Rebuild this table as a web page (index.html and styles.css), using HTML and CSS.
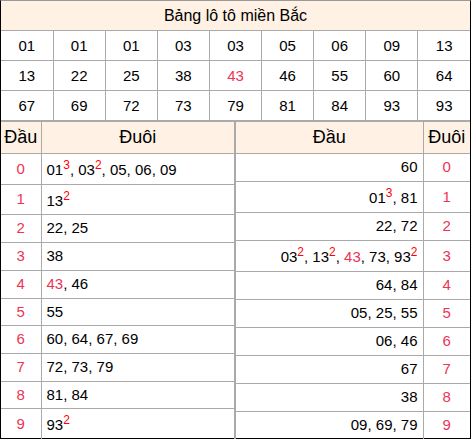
FILE: index.html
```html
<!DOCTYPE html>
<html lang="vi">
<head>
<meta charset="utf-8">
<title>Bảng lô tô miền Bắc</title>
<link rel="stylesheet" href="styles.css">
</head>
<body>
<div class="board">
  <table class="grid">
    <tr><th colspan="9" class="title">Bảng lô tô miền Bắc</th></tr>
    <tr><td>01</td><td>01</td><td>01</td><td>03</td><td>03</td><td>05</td><td>06</td><td>09</td><td>13</td></tr>
    <tr><td>13</td><td>22</td><td>25</td><td>38</td><td class="hl">43</td><td>46</td><td>55</td><td>60</td><td>64</td></tr>
    <tr><td>67</td><td>69</td><td>72</td><td>73</td><td>79</td><td>81</td><td>84</td><td>93</td><td>93</td></tr>
  </table>
  <div class="split">
    <table class="loto loto-left">
      <tr><th class="key">Đầu</th><th>Đuôi</th></tr>
      <tr><td class="key">0</td><td>01<sup>3</sup>, 03<sup>2</sup>, 05, 06, 09</td></tr>
      <tr><td class="key">1</td><td>13<sup>2</sup></td></tr>
      <tr><td class="key">2</td><td>22, 25</td></tr>
      <tr><td class="key">3</td><td>38</td></tr>
      <tr><td class="key">4</td><td><span class="hl">43</span>, 46</td></tr>
      <tr><td class="key">5</td><td>55</td></tr>
      <tr><td class="key">6</td><td>60, 64, 67, 69</td></tr>
      <tr><td class="key">7</td><td>72, 73, 79</td></tr>
      <tr><td class="key">8</td><td>81, 84</td></tr>
      <tr><td class="key">9</td><td>93<sup>2</sup></td></tr>
    </table>
    <table class="loto loto-right">
      <tr><th>Đầu</th><th class="key">Đuôi</th></tr>
      <tr><td class="vals">60</td><td class="key">0</td></tr>
      <tr><td class="vals">01<sup>3</sup>, 81</td><td class="key">1</td></tr>
      <tr><td class="vals">22, 72</td><td class="key">2</td></tr>
      <tr><td class="vals">03<sup>2</sup>, 13<sup>2</sup>, <span class="hl">43</span>, 73, 93<sup>2</sup></td><td class="key">3</td></tr>
      <tr><td class="vals">64, 84</td><td class="key">4</td></tr>
      <tr><td class="vals">05, 25, 55</td><td class="key">5</td></tr>
      <tr><td class="vals">06, 46</td><td class="key">6</td></tr>
      <tr><td class="vals">67</td><td class="key">7</td></tr>
      <tr><td class="vals">38</td><td class="key">8</td></tr>
      <tr><td class="vals">09, 69, 79</td><td class="key">9</td></tr>
    </table>
  </div>
</div>
</body>
</html>
```
FILE: styles.css
```css
* { box-sizing: border-box; }
html, body { margin: 0; padding: 0; background: #fff; }
body {
  font-family: "Liberation Sans", Arial, sans-serif;
  font-size: 15px;
  color: #000;
}
.board {
  width: 471px;
  height: 439px;
  border: 1px solid #000;
  border-top-color: #999;
  display: flex;
  flex-direction: column;
}
table {
  border-collapse: collapse;
  border-spacing: 0;
}
.grid {
  width: 100%;
  table-layout: fixed;
  border-top: hidden;
  border-left: hidden;
  border-right: hidden;
}
.grid td, .grid th {
  border: 1px solid #aaa;
  text-align: center;
  font-weight: normal;
}
.grid .title {
  background: #fff1e4;
  font-size: 16px;
  line-height: 19px;
  padding: 5px 0;
}
.grid td {
  line-height: 17px;
  padding: 6px 0;
}
.split {
  flex: 1;
  display: flex;
  align-items: stretch;
}
.loto {
  height: 100%;
  border-top: 1px solid #aaa;
  border-bottom: hidden;
}
.loto-left { width: 234px; border-left: hidden; }
.loto-right { flex: 1; border-right: hidden; }
.loto th, .loto td {
  border: 1px solid #aaa;
  padding: 5px 5px;
  line-height: 16.7px;
}
.loto th {
  background: #fff1e4;
  font-weight: normal;
  font-size: 18px;
  line-height: 21px;
  text-align: center;
}
.loto-left th.key { width: 40px; padding: 5px 2px; }
.loto-right th.key { width: 47px; padding: 5px 3px; }
.loto td { text-align: left; }
.loto td.key { text-align: center; color: #ee3355; padding: 5px 0; }
.loto td.vals { text-align: right; }
.hl { color: #ee3355; }
sup {
  color: #f00;
  font-size: 12px;
  line-height: 1;
  vertical-align: super;
}
```
